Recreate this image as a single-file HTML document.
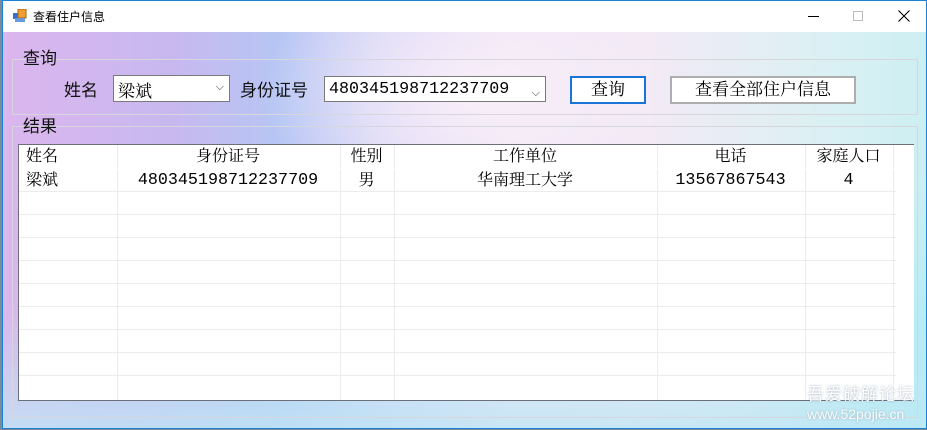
<!DOCTYPE html>
<html><head><meta charset="utf-8"><style>
*{margin:0;padding:0;box-sizing:border-box}
body{width:927px;height:430px;background:#7a8a9a;position:relative;overflow:hidden;font-family:"Liberation Serif","Noto Serif CJK SC",serif;color:#000}
.win{position:absolute;left:2px;top:0;width:925px;height:429px;border:1px solid #1883d7;background:#fff}
.title{position:absolute;left:0;top:0;right:0;height:31px;background:#fff;font-family:"Liberation Sans","Noto Sans CJK SC",sans-serif;font-size:12px}
.client{position:absolute;left:0;top:31px;right:0;bottom:0;
background:
radial-gradient(ellipse 300px 200px at 470px 60px,rgba(250,240,250,.9),rgba(250,240,250,0) 70%),
radial-gradient(ellipse 250px 200px at 925px 300px,rgba(180,235,245,.9),rgba(180,235,245,0) 80%),
linear-gradient(180deg,rgba(255,255,255,0) 70%,rgba(190,230,245,.8) 100%),
linear-gradient(90deg,#dcb6ee 0%,#c8b8f0 18%,#b6c6f4 30%,#d8d6f6 42%,#efe6f6 55%,#f2eaf6 70%,#dcf0f4 88%,#cdeff2 100%)}
.gb{position:absolute;border:1px solid #d6d6dc}
.lbl{position:absolute;font-size:17px;font-family:"Liberation Sans","Noto Sans CJK SC",sans-serif;color:#111}
.combo{position:absolute;background:#fff;border:1px solid #7a7a7a;height:27px;font-size:17px;padding:1px 4px;font-family:"Liberation Serif","Noto Serif CJK SC",serif}
.combo .ar{position:absolute;right:5px;top:4px;font-size:11px;color:#333;font-family:"DejaVu Sans",sans-serif}
.btn{position:absolute;background:#fff;font-size:17px;text-align:center;line-height:22px;font-family:"Liberation Serif","Noto Serif CJK SC",serif}
.grid{position:absolute;left:15px;top:112px;width:896px;height:257px;border:1px solid #6b6f7a;background:#fff;border-right:none}
.h{position:absolute;height:1px;background:#ececec;left:0;width:877px}
.v{position:absolute;width:1px;background:#ececec;top:0;bottom:0}
.c{position:absolute;font-size:16px;text-align:center;line-height:20px}
.n{font-family:"Liberation Mono",monospace;font-size:16.7px;letter-spacing:0}
</style></head><body>
<div class="win">
<div class="title">
<svg style="position:absolute;left:10px;top:8px" width="15" height="14"><rect x="0" y="4" width="6" height="6" fill="#3a6ec8"/><rect x="5" y="0" width="8" height="9" fill="#f0a030" stroke="#b06010" stroke-width="1"/><rect x="2" y="9" width="10" height="4" fill="#6a9ad8"/></svg>
<span style="position:absolute;left:30px;top:7px">查看住户信息</span>
<div style="position:absolute;left:805px;top:15px;width:11px;height:1px;background:#000"></div>
<div style="position:absolute;left:850px;top:10px;width:10px;height:10px;border:1px solid #bbb"></div>
<svg style="position:absolute;left:895px;top:9px" width="12" height="12"><path d="M0.5 0.5L11.5 11.5M11.5 0.5L0.5 11.5" stroke="#000" stroke-width="1.1"/></svg>
</div>
<div class="client">
<div class="gb" style="left:9px;top:27px;width:906px;height:56px"></div>
<div class="lbl" style="left:16px;top:12px;padding:0 4px;">查询</div>
<div class="lbl" style="left:61px;top:44px">姓名</div>
<div class="combo" style="left:110px;top:43px;width:117px">梁斌<span class="ar">⌵</span></div>
<div class="lbl" style="left:237px;top:44px">身份证号</div>
<div class="combo n" style="left:321px;top:44px;width:222px;height:26px;line-height:24px">480345198712237709<span class="ar">⌵</span></div>
<div class="btn" style="left:567px;top:44px;width:76px;height:28px;border:2px solid #1a74d6;line-height:24px">查询</div>
<div class="btn" style="left:667px;top:44px;width:186px;height:28px;border:2px solid #adadad;line-height:24px">查看全部住户信息</div>
<div class="gb" style="left:9px;top:94px;width:906px;height:292px"></div>
<div class="lbl" style="left:16px;top:80px;padding:0 4px;">结果</div>
<div class="grid">
<div class="v" style="left:98px"></div><div class="v" style="left:321px"></div><div class="v" style="left:375px"></div><div class="v" style="left:638px"></div><div class="v" style="left:786px"></div><div class="v" style="left:874px"></div>
<div class="h" style="top:23px;background:#fff"></div>
<div class="h" style="top:46px"></div><div class="h" style="top:69px"></div><div class="h" style="top:92px"></div><div class="h" style="top:115px"></div><div class="h" style="top:138px"></div><div class="h" style="top:161px"></div><div class="h" style="top:184px"></div><div class="h" style="top:207px"></div><div class="h" style="top:230px"></div>
<div class="c" style="left:7px;top:2px;text-align:left">姓名</div>
<div class="c" style="left:98px;width:222px;top:2px">身份证号</div>
<div class="c" style="left:321px;width:53px;top:2px">性别</div>
<div class="c" style="left:375px;width:262px;top:2px">工作单位</div>
<div class="c" style="left:638px;width:147px;top:2px">电话</div>
<div class="c" style="left:786px;width:87px;top:2px">家庭人口</div>
<div class="c" style="left:7px;top:26px;text-align:left">梁斌</div>
<div class="c n" style="left:98px;width:222px;top:26px">480345198712237709</div>
<div class="c" style="left:321px;width:53px;top:26px">男</div>
<div class="c" style="left:375px;width:262px;top:26px">华南理工大学</div>
<div class="c n" style="left:638px;width:147px;top:26px">13567867543</div>
<div class="c n" style="left:786px;width:87px;top:26px">4</div>
</div>
<div style="position:absolute;left:804px;top:351px;font-size:17px;color:rgba(255,255,255,.95);text-shadow:0 0 2px rgba(120,140,160,.7);font-family:'Noto Sans CJK SC',sans-serif;line-height:20px;letter-spacing:1px">吾爱破解论坛</div>
<div style="position:absolute;left:804px;top:374px;font-size:14px;color:rgba(255,255,255,.95);text-shadow:0 0 2px rgba(120,140,160,.6);font-family:'Liberation Sans',sans-serif">www.52pojie.cn</div>
</div>
</div>
</body></html>
